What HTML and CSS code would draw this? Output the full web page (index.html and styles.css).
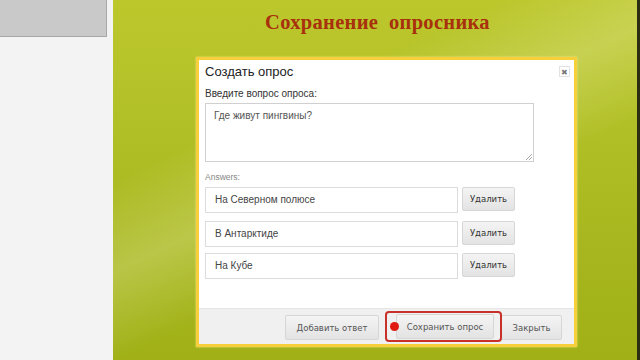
FILE: index.html
```html
<!DOCTYPE html>
<html>
<head>
<meta charset="utf-8">
<link rel="stylesheet" href="styles.css">
</head>
<body>
<div class="screen">
  <aside class="side">
    <div class="side-box"></div>
  </aside>
  <main class="stage">
    <h1 class="title">Сохранение&nbsp; опросника</h1>
    <div class="dialog">
      <div class="dialog-body">
        <div class="dialog-head">
          <span class="dialog-title">Создать опрос</span>
          <span class="close">&#x2716;</span>
        </div>
        <label class="label">Введите вопрос опроса:</label>
        <div class="textarea">Где живут пингвины?<span class="grip"></span></div>
        <div class="answers-label">Answers:</div>
        <div class="answer"><div class="input">На Северном полюсе</div><button class="btn">Удалить</button></div>
        <div class="answer gap"><div class="input">В Антарктиде</div><button class="btn">Удалить</button></div>
        <div class="answer gap2"><div class="input">На Кубе</div><button class="btn">Удалить</button></div>
      </div>
      <div class="dialog-foot">
        <button class="btn foot-btn add">Добавить ответ</button>
        <div class="highlight">
          <span class="dot"></span>
          <button class="btn foot-btn save">Сохранить опрос</button>
        </div>
        <button class="btn foot-btn closebtn">Закрыть</button>
      </div>
    </div>
  </main>
  <div class="edge"></div>
</div>
</body>
</html>
```
FILE: styles.css
```css
* { box-sizing: border-box; }
html, body { margin: 0; padding: 0; }
body { width: 640px; height: 360px; overflow: hidden; font-family: "Liberation Sans", Arial, sans-serif; }
.screen { display: flex; width: 640px; height: 360px; }
.side { width: 113px; background: #f3f3f3; flex: none; }
.side-box { width: 107px; height: 37px; background: #c9c9c9; border: 1px solid #a8a8a8; border-top: none; border-left: none; }
.stage {
  flex: 1;
  background:
    linear-gradient(155deg, rgba(255,255,210,0) 30%, rgba(255,255,220,0.22) 45%, rgba(255,255,210,0) 60%),
    linear-gradient(180deg, #bcc72c 0%, #b3c128 30%, #a7b61e 70%, #a0b016 100%);
  display: flex; flex-direction: column;
}
.edge { width: 3px; background: #2b2e10; flex: none; }
.title {
  margin: 10px 0 0 0; height: 24px; text-align: center; padding-left: 5px;
  font-family: "Liberation Serif", "Times New Roman", serif; font-weight: bold;
  font-size: 20.5px; line-height: 24px; color: #a8300c; letter-spacing: 0.3px;
}
.dialog {
  margin: 23px 0 0 83px; width: 381px; height: 290px;
  border: 3px solid #f6cf3a; background: #fff;
  display: flex; flex-direction: column;
  box-shadow: 0 0 2px rgba(255,240,150,0.8);
}
.dialog-body { flex: 1; padding: 0 6px; }
.dialog-head { height: 22px; display: flex; align-items: center; justify-content: space-between; }
.dialog-title { font-size: 13px; color: #222; }
.close {
  width: 11px; height: 11px; font-size: 8px; color: #777; line-height: 11px; text-align: center;
  border: 1px solid #e2e2e2; margin-top: 0; margin-right: -2px;
}
.label { display: block; font-size: 10px; color: #333; height: 12px; line-height: 12px; margin-top: 6px; }
.textarea {
  margin-top: 3px; width: 329px; height: 59px; border: 1px solid #d0d0d0;
  font-size: 10px; color: #555; padding: 6px 8px; position: relative;
}
.grip { position: absolute; right: 1px; bottom: 1px; width: 6px; height: 6px;
  background: linear-gradient(135deg, transparent 45%, #aaa 45%, #aaa 55%, transparent 55%, transparent 70%, #aaa 70%, #aaa 80%, transparent 80%); }
.answers-label { margin-top: 10px; font-size: 8.5px; color: #888; height: 11px; line-height: 11px; }
.answer { display: flex; align-items: flex-start; gap: 4px; margin-top: 4px; }
.answer.gap { margin-top: 8px; }
.answer.gap2 { margin-top: 6px; }
.input {
  width: 253px; height: 26px; border: 1px solid #dcdcdc; font-size: 10px; color: #444;
  padding-left: 9px; line-height: 24px;
}
.btn {
  font-family: "DejaVu Sans", Verdana, sans-serif; font-size: 8.5px; color: #333;
  background: linear-gradient(#f4f4f4, #e3e3e3); border: 1px solid #d6d6d6; border-radius: 2px;
  padding: 0; cursor: default;
}
.answer .btn { width: 53px; height: 24px; }
.dialog-foot {
  height: 36px; background: #f0f0f0; border-top: 1px solid #e6e6e6;
  display: flex; align-items: center; padding-left: 86px;
}
.foot-btn { height: 25px; color: #555; }
.add { width: 94px; margin-top: 2px; }
.highlight {
  margin-left: 6px; width: 117px; height: 31px; border: 2px solid #c8302a; border-radius: 4px;
  display: flex; align-items: center; padding-left: 3px; position: relative;
}
.dot { width: 9px; height: 9px; border-radius: 50%; background: #e01a10; flex: none; margin-right: -3px; position: relative; z-index: 1; }
.save { width: 98px; }
.closebtn { width: 61px; margin-left: -1px; margin-top: 2px; }
```
